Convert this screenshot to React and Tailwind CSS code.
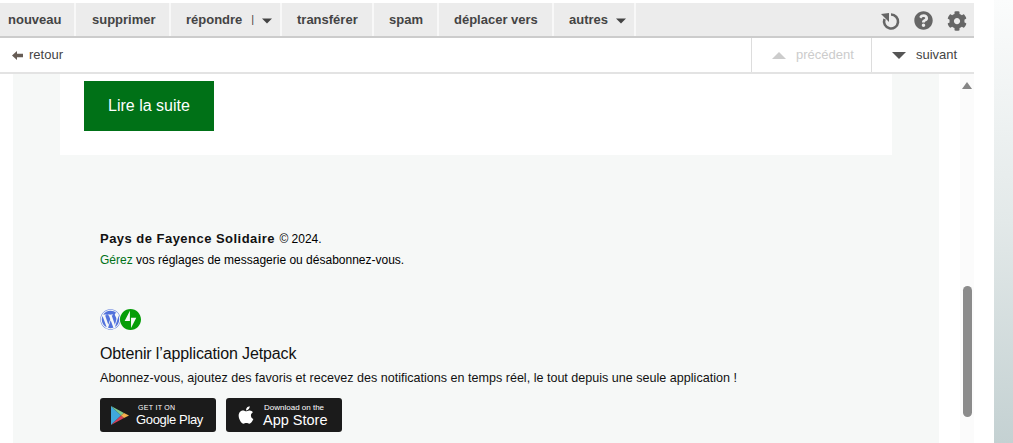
import React from 'react';
import { FaApple, FaCog, FaQuestionCircle, FaWordpress } from 'react-icons/fa';

function Caret({ up, className }) {
  return (
    <svg width="12" height="6" viewBox="0 0 12 6" className={className}>
      <path d={up ? 'M0 6 L6 0 L12 6 Z' : 'M0 0 L12 0 L6 6 Z'} fill="currentColor" />
    </svg>
  );
}

function ToolButton({ className, children }) {
  return (
    <div className={`flex h-full items-center border-r-2 border-[#f8f8f8] text-[13px] font-bold text-[#444] ${className}`}>
      {children}
    </div>
  );
}

function Toolbar() {
  return (
    <div className="flex h-[35px] items-center border-b-2 border-[#ccc] bg-[#ececec]">
      <ToolButton className="w-[76px] pl-2">nouveau</ToolButton>
      <ToolButton className="w-[95px] pl-4">supprimer</ToolButton>
      <ToolButton className="w-[111px] pl-[15px]">
        répondre
        <span className="ml-[9px] text-[11px] font-normal">|</span>
        <Caret className="ml-2 mt-[2px] w-[10px] text-[#444]" />
      </ToolButton>
      <ToolButton className="w-[92px] pl-[15px]">transférer</ToolButton>
      <ToolButton className="w-[65px] pl-[15px]">spam</ToolButton>
      <ToolButton className="w-[115px] pl-[15px]">déplacer vers</ToolButton>
      <ToolButton className="w-[82px] pl-[15px]">
        autres
        <Caret className="ml-2 mt-[2px] w-[10px] text-[#444]" />
      </ToolButton>
      <div className="ml-auto mt-[2px] flex items-center gap-[14px] pr-[7px] text-[#666]">
        <svg width="20" height="20" viewBox="0 0 20 20" fill="none">
          <path d="M11 3.5 A7 7 0 1 1 4.5 8" stroke="#666" strokeWidth="2.6" />
          <path d="M1 3 L9 2 L9 11 Z" fill="#666" />
        </svg>
        <FaQuestionCircle size={19} />
        <FaCog size={20} />
      </div>
    </div>
  );
}

function SubBar() {
  return (
    <div className="flex h-[36px] items-center border-b-2 border-[#e3e3e3] bg-white text-[13px] text-[#444]">
      <div className="flex items-center pl-3">
        <svg width="11" height="9" viewBox="0 0 11 9">
          <path d="M0 4.5 L5 0 V2.8 H11 V6.2 H5 V9 Z" fill="#665c55" />
        </svg>
        <span className="ml-[6px]">retour</span>
      </div>
      <div className="ml-auto flex h-full w-[120px] items-center border-l border-[#ddd] pl-5 text-[#ccc]">
        <Caret up className="h-[7px] w-[14px] text-[#ccc]" />
        <span className="ml-[10px]">précédent</span>
      </div>
      <div className="flex h-full w-[103px] items-center border-l border-[#ddd] pl-5">
        <Caret className="h-[7px] w-[14px] text-[#555]" />
        <span className="ml-[10px]">suivant</span>
      </div>
    </div>
  );
}

function Badge({ children }) {
  return (
    <div className="flex h-[34px] w-[116px] items-center rounded-[3px] bg-[#1b1b1b] text-white">
      {children}
    </div>
  );
}

function PlayLogo() {
  return (
    <svg width="20" height="21" viewBox="0 0 20 21" className="ml-[10px]">
      <path d="M1 1 L11 10.5 L1 20 Z" fill="#3fa8dc" />
      <path d="M1 1 L14 8 L11 10.5 Z" fill="#7ec98a" />
      <path d="M1 20 L14 13 L11 10.5 Z" fill="#d6405a" />
      <path d="M14 8 L19 10.5 L14 13 L11 10.5 Z" fill="#f5b04c" />
    </svg>
  );
}

function MailBody() {
  return (
    <div className="h-full w-[926px] overflow-hidden bg-[#f6f8f7]">
      <div className="ml-[47px] h-[81px] w-[832px] bg-white pl-[24px] pt-[7px]">
        <div className="flex h-[50px] w-[130px] items-center justify-center bg-[#007117] text-[16px] text-white">
          Lire la suite
        </div>
      </div>
      <div className="pl-[87px] pt-[77px] text-black">
        <p className="text-[12px] leading-[14px]">
          <span className="mr-[1px] text-[13px] font-bold tracking-[0.47px] text-[#111]">Pays de Fayence Solidaire</span> © 2024.
        </p>
        <p className="mt-[7px] text-[12px] leading-[14px]">
          <span className="text-[#007117]">Gérez</span> vos réglages de messagerie ou désabonnez-vous.
        </p>
        <div className="mt-[41px] flex h-[22px] items-center">
          <FaWordpress size={21} className="text-[#5272dc]" />
          <svg width="21" height="21" viewBox="0 0 32 32" className="-ml-[1px]">
            <path d="M16 32C7.2 32 0 24.8 0 16S7.2 0 16 0s16 7.2 16 16-7.2 16-16 16zm.8-18.7v15.5l8-15.5h-8zm-1.7 4.8V2.7l-8 15.5h8z" fill="#069e08" />
          </svg>
        </div>
        <p className="mt-[14px] text-[16px] leading-[20px] tracking-[-0.13px] text-[#111]">Obtenir l’application Jetpack</p>
        <p className="mt-[6px] text-[12.57px] leading-[16px] text-[#111]">
          Abonnez-vous, ajoutez des favoris et recevez des notifications en temps réel, le tout depuis une seule application !
        </p>
        <div className="mt-[12px] flex gap-[10px]">
          <Badge>
            <PlayLogo />
            <div className="ml-[6px] flex flex-col">
              <span className="ml-[2px] text-[7px] leading-[8px] tracking-[0.3px]">GET IT ON</span>
              <span className="text-[13px] leading-[15px] tracking-[-0.35px]">Google Play</span>
            </div>
          </Badge>
          <Badge>
            <FaApple size={20} className="ml-[10px]" />
            <div className="ml-[7px] flex flex-col">
              <span className="ml-[1px] text-[8px] leading-[9px]">Download on the</span>
              <span className="text-[14.5px] leading-[16px]">App Store</span>
            </div>
          </Badge>
        </div>
      </div>
    </div>
  );
}

function Scrollbar() {
  return (
    <div className="flex h-full w-[14px] flex-col items-center bg-[#fbfbfb]">
      <svg width="10" height="7" viewBox="0 0 10 7" className="mt-[8px]">
        <path d="M0 7 L5 0 L10 7 Z" fill="#858585" />
      </svg>
      <div className="mt-[197px] h-[131px] w-[9px] rounded-full bg-[#8b8b8b]" />
    </div>
  );
}

export default function App() {
  return (
    <div className="flex h-[443px] w-[1013px] overflow-hidden bg-white font-['Liberation_Sans',Arial,sans-serif]">
      <div className="flex w-[974px] flex-col pt-[3px]">
        <Toolbar />
        <SubBar />
        <div className="flex h-[369px]">
          <div className="ml-[13px]"><MailBody /></div>
          <div className="ml-auto"><Scrollbar /></div>
        </div>
      </div>
      <div className="ml-[20px] h-full w-[19px] bg-gradient-to-b from-[#fbfcfc] via-[#e3e9e9] to-[#c4d1d2]" />
    </div>
  );
}
